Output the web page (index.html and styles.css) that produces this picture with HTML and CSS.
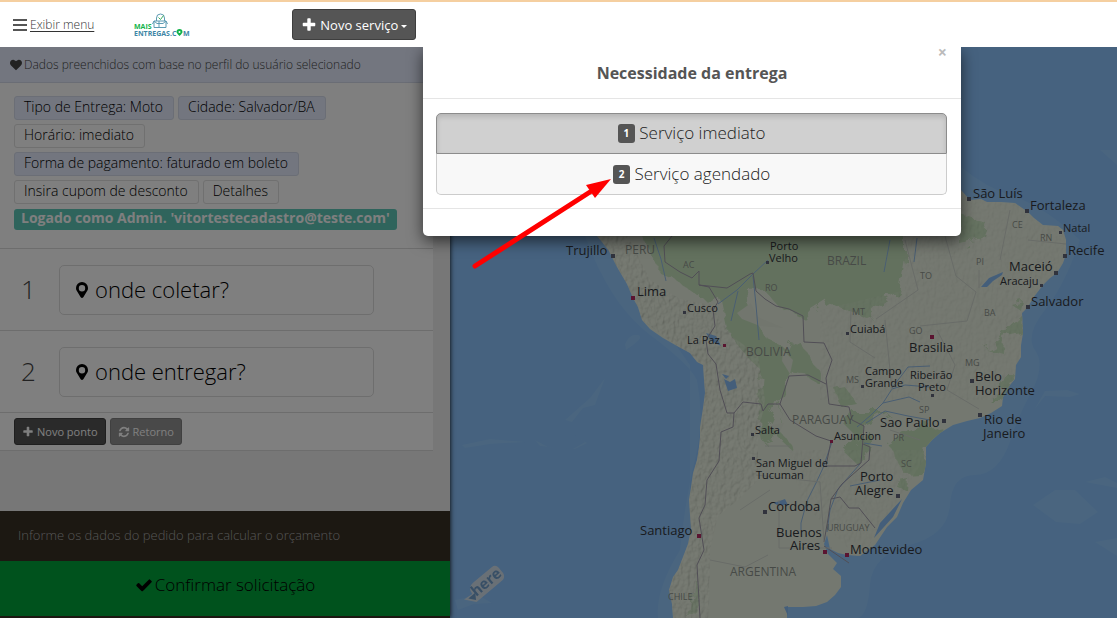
FILE: index.html
```html
<!DOCTYPE html>
<html lang="pt-BR">
<head>
<meta charset="utf-8">
<title>Mais Entregas</title>
<link rel="stylesheet" href="styles.css">
</head>
<body>
<svg class="defs" aria-hidden="true">
  <symbol id="plus" viewBox="0 0 1792 1792"><path d="M1600 736v192q0 40-28 68t-68 28h-416v416q0 40-28 68t-68 28h-192q-40 0-68-28t-28-68v-416h-416q-40 0-68-28t-28-68v-192q0-40 28-68t68-28h416v-416q0-40 28-68t68-28h192q40 0 68 28t28 68v416h416q40 0 68 28t28 68z"/></symbol>
  <symbol id="check" viewBox="0 0 1792 1792"><path d="M1671 566q0 40-28 68l-724 724-136 136q-28 28-68 28t-68-28l-136-136-362-362q-28-28-28-68t28-68l136-136q28-28 68-28t68 28l294 295 656-657q28-28 68-28t68 28l136 136q28 28 28 68z"/></symbol>
  <symbol id="refresh" viewBox="0 0 1792 1792"><path d="M1639 1056q0 5-1 7-64 268-268 434.500t-478 166.500q-146 0-282.500-55t-243.500-157l-129 129q-19 19-45 19t-45-19-19-45v-448q0-26 19-45t45-19h448q26 0 45 19t19 45-19 45l-137 137q71 66 161 102t187 36q134 0 250-65t186-179q11-17 53-117 8-23 30-23h192q13 0 22.500 9.500t9.500 22.500zm25-800v448q0 26-19 45t-45 19h-448q-26 0-45-19t-19-45 19-45l138-138q-148-137-349-137-134 0-250 65t-186 179q-11 17-53 117-8 23-30 23h-199q-13 0-22.500-9.500t-9.500-22.500v-7q65-268 270-434.500t480-166.500q146 0 284 55.500t245 156.500l130-129q19-19 45-19t45 19 19 45z"/></symbol>
  <symbol id="pin" viewBox="0 0 12 16"><path fill-rule="evenodd" d="M6 0a6 6 0 0 1 6 6q0 1.500-.6 2.600L7.300 15.200Q6 16.600 4.700 15.200L.6 8.600Q0 7.500 0 6a6 6 0 0 1 6-6zM6 3a3.200 3.200 0 1 0 0 6.400A3.200 3.200 0 0 0 6 3z"/></symbol>
  <symbol id="heart" viewBox="0 0 1792 1792"><path d="M896 1664q-26 0-44-18l-624-602q-10-8-27.500-26t-55.500-65.500-68-97.500-53.500-121-23.500-138q0-220 127-344t351-124q62 0 126.500 21.500t120 58 95.500 68.500 76 68q36-36 76-68t95.500-68.500 120-58 126.500-21.500q224 0 351 124t127 344q0 221-229 450l-623 600q-18 18-44 18z"/></symbol>
</svg>

<header class="topbar">
  <a class="menu-link" href="#"><svg class="menu-icon" viewBox="0 0 14 12"><path d="M0 1h14M0 6h14M0 11h14"/></svg><span>Exibir menu</span></a>
  <svg class="logo" viewBox="0 0 58 24" role="img" aria-label="Mais Entregas.com">
    <g fill="none" stroke="#5d9bb3"><path d="M20 8v6.500h12V8zM20 8l-1.500 3M32 8l1.500 3M20 8l3 2.500h6L32 8M25 8v6M22.500 8V5a4 4 0 1 1 8 0v3"/><path d="M24.500 4.500l2 2 3-4" stroke="#3db05c"/></g>
    <text class="logo-mais" x="0" y="16">MAIS</text>
    <text class="logo-name" x="0" y="23">ENTREGAS.C</text>
    <path d="M45.500 23q-3-3-3-4a3 3 0 0 1 6 0q0 1-3 4z" fill="#12b34a"/><circle cx="45.500" cy="19" r="1" fill="#fff"/>
    <text class="logo-name" x="49" y="23">M</text>
  </svg>
  <button class="new-service" type="button"><svg class="icon-14"><use href="#plus"/></svg><span>Novo serviço</span><i class="caret"></i></button>
</header>

<main class="workspace">
  <section class="sidebar">
    <div class="scroll">
      <p class="notice"><svg class="icon-12"><use href="#heart"/></svg>Dados preenchidos com base no perfil do usuário selecionado</p>
      <div class="chips">
        <div class="chip-row"><button class="chip filled" type="button">Tipo de Entrega: Moto</button><button class="chip filled" type="button">Cidade: Salvador/BA</button></div>
        <div class="chip-row"><button class="chip" type="button">Horário: imediato</button></div>
        <div class="chip-row"><button class="chip filled" type="button">Forma de pagamento: faturado em boleto</button></div>
        <div class="chip-row"><button class="chip" type="button">Insira cupom de desconto</button><button class="chip" type="button">Detalhes</button></div>
        <div class="logged">Logado como Admin. 'vitortestecadastro@teste.com'</div>
      </div>
      <div class="stop"><label class="stop-number" for="coleta">1</label><div class="stop-field"><svg class="icon-pin"><use href="#pin"/></svg><input id="coleta" type="text" placeholder="onde coletar?"></div></div>
      <div class="stop"><label class="stop-number" for="entrega">2</label><div class="stop-field"><svg class="icon-pin"><use href="#pin"/></svg><input id="entrega" type="text" placeholder="onde entregar?"></div></div>
      <div class="actions"><button class="small-btn" type="button"><svg class="icon-12"><use href="#plus"/></svg>Novo ponto</button><button class="small-btn muted" type="button"><svg class="icon-12"><use href="#refresh"/></svg>Retorno</button></div>
    </div>
    <footer class="order">
      <p class="order-hint">Informe os dados do pedido para calcular o orçamento</p>
      <button class="confirm" type="button"><svg class="icon-18"><use href="#check"/></svg>Confirmar solicitação</button>
    </footer>
  </section>

  <svg class="map" viewBox="450 47 667 571" preserveAspectRatio="xMinYMin slice" role="img" aria-label="Mapa da América do Sul">
    <defs>
      <filter id="relief" x="0" y="0" width="1" height="1"><feTurbulence type="fractalNoise" baseFrequency="0.28 0.18" numOctaves="3" seed="4" result="n"/><feDiffuseLighting in="n" surfaceScale="2" lighting-color="#fbfff0" result="l"><feDistantLight azimuth="225" elevation="58"/></feDiffuseLighting><feComposite in="l" in2="SourceGraphic" operator="in"/></filter>
      <filter id="rough" x="-10%" y="-10%" width="120%" height="120%"><feTurbulence type="fractalNoise" baseFrequency="0.07" numOctaves="3" seed="8"/><feDisplacementMap in="SourceGraphic" scale="16"/></filter>
      <path id="land" d="M560 170L597 236 602 242 609 251 617 267 627 284 633 298 638 307 642 320 650 329 663 338 677 346 690 353 697 362 703 365 704 380 705 393 703 408 700 427 700 437 699 447 697 460 693 473 691 487 689 500 690 515 691 530 688 544 683 557 678 570 673 577 669 590 672 604 673 618H787V607L803 607 816 606 827 602 835 595 841 587 841 576 833 569 837 563 828 554 824 544 827 535 830 549 838 553 847 555 860 556 875 545 887 527 897 517 903 503 911 490 923 480 926 463 926 447 932 440 940 433 953 425 967 421 980 418 991 413 1002 406 1003 397 1010 385 1015 379 1016 365 1021 357 1021 345 1023 333 1022 313 1028 307 1033 298 1043 285 1050 278 1057 273 1063 263 1066 254 1066 240 1063 230 1058 226 1043 225 1034 218 1028 212 1015 203 1000 202 987 202 981 199 970 200 961 190 940 170Z"/>
      <clipPath id="land-clip"><use href="#land"/></clipPath>
    </defs>
    <rect x="450" y="47" width="667" height="571" fill="#8cc4fe"/>
    <g fill="#94cbff">
      <path d="M585 236Q610 305 650 335T697 380Q705 420 695 460T680 550Q655 590 658 618H690V365L600 236Z"/>
      <path d="M961 167Q985 187 1015 197T1080 240Q1065 285 1045 310T1035 350Q1046 365 1031 393T1010 442Q998 475 975 475T950 505 910 545 870 585 858 618H780V240H960Z"/>
      <path d="M1034 410L1045 391 1067 390 1080 394 1070 397 1045 396ZM1033 505L1055 490 1075 490 1098 512 1080 524 1056 522ZM1085 482L1105 477 1117 483V488ZM1095 542L1117 538V556ZM565 420L590 398 605 378 595 405 583 408 572 422ZM462 445L490 439 525 442 490 444 465 448ZM535 440L540 446 573 449 585 442 575 435 587 443 575 449 548 447ZM625 344Q630 333 638 335T626 350ZM455 600L478 595 492 603 474 604 458 610ZM1100 150H1117V165Z"/>
    </g>
    <use href="#land" fill="#e9f1e1"/>
    <g clip-path="url(#land-clip)">
      <g class="forest" filter="url(#rough)">
        <path d="M635 220H905V260L899 292 880 305 868 318 850 311 829 301 813 311 806 319 779 307 764 290 749 291 751 313 765 337 790 349 792 372 770 420 760 432 758 402 761 370 744 354 728 333 721 300 699 297 674 279 660 273Z"/>
        <path d="M790 342L803 345 819 372 818 383 800 373 782 370 780 430 790 444 796 454 782 441 778 372ZM836 390L846 388 858 405 841 408ZM854 412H888L865 423 860 440 846 426ZM843 451L870 431 872 452 858 465ZM887 443L905 434 930 425 945 431 926 449 920 474 905 475ZM984 347L997 340 1023 315 1022 334 1003 338 1002 352ZM1003 375H1015L1003 399 991 404ZM895 485L910 481 909 493ZM961 215L986 223 979 240 960 244ZM1010 303L1022 300 1020 310ZM696 576L699 595 695 618H688ZM760 418L785 438 765 444Z"/>
      </g>
      <path class="clearing" d="M737 313L751 303 758 317 784 328 760 326 742 319ZM783 350L793 360 790 374 782 361ZM771 425L784 423 779 434Z"/>
      <path class="mountains" filter="url(#relief)" d="M597 236L628 236 650 280 680 299 712 305 730 335 758 355 765 400 758 440 758 480 738 500 718 516 710 550 709 618H673L669 590 691 530 689 500 699 447 705 393 703 365 642 320 617 267Z"/>
      <path class="hills" filter="url(#relief)" d="M758 400H1070V190H905V290L820 310 820 400ZM790 450H930L860 560 800 500Z"/>
    </g>
    <g class="rivers">
      <path d="M654 238L661 259 666 281M768 260L753 274 737 290 718 304M753 276L756 305 759 340M738 291L731 321M917 238L914 262M890 240L884 272M857 427L871 415 883 403 892 389 905 385 930 387M883 403L909 397 920 402M892 388L908 367 930 366M866 423L885 411 908 416 930 420M864 443L882 446M832 442L823 468 816 483 807 501 801 523V530M860 464L838 489 830 510 827 532M880 480L850 486"/>
      <path class="lake" d="M706 333L716 336 721 346 711 341ZM722 374L729 376 726 379ZM724 379L730 382 735 379 737 388 728 391ZM981 287L989 278 1003 272 1002 275 993 281 987 287ZM774 503L785 499 788 505 777 505ZM874 538L880 523 902 499 893 517ZM784 607L788 606V616Z"/>
    </g>
    <g class="borders">
      <path d="M672 236L664 246 665 262 680 272 692 278 699 271 699 285 727 288 750 274 753 273 756 291 765 299 776 306 789 309 803 316 804 342 824 343 832 360 826 378 829 404M699 285L709 287 718 302 713 310 715 326 706 340 708 354 716 364 720 390 727 413H734L743 402 761 404 763 411 768 404 780 404 789 376 808 375 826 384M734 413L733 427 721 432 719 461 707 480 705 505 699 518 704 550 697 565 700 618M780 404L790 420 816 436 831 441 826 466 855 466 861 463 864 426 852 420 849 407 829 404M863 444L870 447 869 460 842 484 831 499 828 519 824 542M831 499L840 497 849 508 859 508 875 528M824 546L849 563"/>
      <path class="states" d="M765 446H790M779 500V548H832M756 475L820 482 824 542M710 560L745 567 768 555M740 510L770 490M905 240L918 290 876 319M945 236L956 276 976 292 967 321 920 326M851 308L850 342 875 358M885 320L892 390M937 330L955 365 947 390 979 409M890 430L920 440M1010 210L1000 260M1028 240L1066 244M979 288L979 270"/>
    </g>
    <g class="areas">
      <text x="625" y="254">PERU</text><text x="827" y="265">BRAZIL</text><text x="746" y="356">BOLIVIA</text><text x="792" y="424">PARAGUAY</text><text x="730" y="576">ARGENTINA</text>
      <g class="minor"><text x="827" y="531">URUGUAY</text><text x="668" y="600">CHILE</text><text x="683" y="268">AC</text><text x="765" y="291">RO</text><text x="920" y="279">TO</text><text x="976" y="265">PI</text><text x="852" y="315">MT</text><text x="909" y="334">GO</text><text x="984" y="316">BA</text><text x="965" y="366">MG</text><text x="846" y="383">MS</text><text x="919" y="413">SP</text><text x="893" y="441">PR</text><text x="901" y="467">SC</text><text x="1012" y="228">CE</text><text x="1040" y="241">RN</text></g>
    </g>
    <g class="towns">
      <text x="566" y="255">Trujillo</text><text x="637" y="296">Lima</text><text x="973" y="198">São Luís</text><text x="1030" y="210">Fortaleza</text><text x="1068" y="255">Recife</text><text x="1009" y="271">Maceió</text><text x="1031" y="306">Salvador</text><text x="909" y="352">Brasilia</text><text x="975" y="381">Belo</text><text x="975" y="395">Horizonte</text><text x="880" y="427">Sao Paulo</text><text x="984" y="424">Rio de</text><text x="983" y="438">Janeiro</text><text x="860" y="481">Porto</text><text x="855" y="495">Alegre</text><text x="768" y="511">Cordoba</text><text x="776" y="537">Buenos</text><text x="790" y="550">Aires</text><text x="850" y="554">Montevideo</text><text x="640" y="535">Santiago</text>
      <g class="minor"><text x="687" y="312">Cusco</text><text x="687" y="344">La Paz</text><text x="770" y="250">Porto</text><text x="769" y="262">Velho</text><text x="850" y="333">Cuiabá</text><text x="865" y="375">Campo</text><text x="865" y="387">Grande</text><text x="910" y="379">Ribeirão</text><text x="918" y="391">Preto</text><text x="755" y="434">Salta</text><text x="834" y="440">Asuncion</text><text x="756" y="467">San Miguel de</text><text x="756" y="479">Tucuman</text><text x="1000" y="285">Aracaju</text><text x="1063" y="232">Natal</text></g>
    </g>
    <path class="dots" d="M611 254h4v4h-4zM683 311h3v3h-3zM766 261h3v3h-3zM846 332h3v3h-3zM861 385h3v3h-3zM931 394h3v3h-3zM970 379h4v4h-4zM942 419h4v4h-4zM978 413h4v4h-4zM896 494h4v4h-4zM763 510h4v4h-4zM751 433h3v3h-3zM752 457h3v3h-3zM967 197h4v4h-4zM1025 209h4v4h-4zM1059 231h3v3h-3zM1063 254h4v4h-4zM1054 271h4v4h-4zM1040 284h3v3h-3zM1026 305h4v4h-4z"/>
    <path class="capitals" d="M631 296h4v4h-4zM723 344h3v3h-3zM930 335h4v4h-4zM830 440h3v3h-3zM697 534h4v4h-4zM823 550h4v4h-4zM845 553h4v4h-4z"/>
    <g class="here" transform="translate(474 599) rotate(-40)"><path d="M-8-6L2-5Q2-13 10-13H34Q39-13 39-8V-1Q38 4 33 4H0Z"/><path class="here-arrow" d="M-4-4L5-4 1 2Z"/><text x="3" y="0">here</text></g>
  </svg>

  <div class="backdrop"></div>

  <section class="modal" role="dialog" aria-labelledby="modal-title">
    <button class="close" type="button" aria-label="Fechar">×</button>
    <h2 class="modal-title" id="modal-title">Necessidade da entrega</h2>
    <div class="modal-body"><div class="options">
      <button class="option active" type="button"><span class="badge">1</span>Serviço imediato</button>
      <button class="option" type="button"><span class="badge">2</span>Serviço agendado</button>
    </div></div>
    <div class="modal-foot"></div>
  </section>
  <svg class="arrow" viewBox="0 0 144 96" aria-hidden="true"><path d="M5 90L120 16" stroke="#f00" stroke-width="5" stroke-linecap="round"/><path d="M141 3L116 9 125 22Z" fill="#f00"/></svg>
</main>
</body>
</html>
```
FILE: styles.css
```css
* { box-sizing: border-box; }
body {
  margin: 0;
  height: 100vh;
  display: flex;
  flex-direction: column;
  overflow: hidden;
  font-family: "Open Sans", "Noto Sans", sans-serif;
  font-weight: 300;
  color: #000;
}
button, input { font: inherit; color: inherit; }
p, h2 { margin: 0; }
svg { flex: none; fill: currentColor; }
.defs { position: absolute; width: 0; height: 0; }
.icon-12 { width: 12px; height: 12px; }
.icon-14 { width: 16px; height: 16px; }
.icon-18 { width: 18px; height: 18px; }
.icon-pin { width: 12px; height: 16px; }

.topbar {
  flex: none;
  height: 47px;
  display: flex;
  align-items: center;
  padding: 0 13px;
  border-top: 2px solid #f5cfa0;
  background: #fff;
}
.menu-link { display: flex; align-items: center; gap: 3px; color: #333; font-size: 12px; text-decoration: none; }
.menu-link span { text-decoration: underline; text-underline-offset: 2px; }
.menu-icon { width: 14px; height: 12px; stroke: #555; stroke-width: 2; }
.logo { width: 58px; height: 24px; margin-left: 40px; }
.logo-mais, .logo-name { font: 700 7px "Open Sans", sans-serif; fill: #3e86a6; }
.logo-mais { fill: #12b34a; }
.new-service {
  display: flex;
  align-items: center;
  gap: 3px;
  height: 31px;
  margin-left: 100px;
  padding: 0 8px;
  border: 1px solid #3e3e3e;
  border-radius: 3px;
  background: #555;
  color: #fff;
  font-size: 13px;
  font-weight: 400;
}
.caret { border: 3px solid transparent; border-top-color: #fff; border-bottom: 0; margin-top: 3px; }

.workspace { position: relative; flex: 1; display: flex; min-height: 0; overflow: hidden; }
.sidebar { position: relative; z-index: 1; flex: none; width: 450px; display: flex; flex-direction: column; box-shadow: 0 0 5px #000; }
.scroll { flex: 1; min-height: 0; overflow: hidden; background: #eee; }
.notice {
  display: flex;
  align-items: center;
  gap: 2px;
  height: 36px;
  padding-left: 10px;
  border-bottom: 1px solid #d4daea;
  background: #e6edff;
  color: #444;
  font-size: 12px;
}
.chips, .stop, .actions { margin-right: 17px; border-bottom: 1px solid #dadada; background: #fff; }
.chips { display: flex; flex-direction: column; align-items: flex-start; gap: 4px; padding: 13px 14px 18px; }
.chip-row { display: flex; gap: 4px; }
.chip {
  height: 24px;
  padding: 0 10px 2px 9px;
  border: 1px solid #e0e0e0;
  border-radius: 3px;
  background: #fff;
  font-size: 14px;
  line-height: 20px;
}
.chip.filled { border-color: #d6dcec; background: #e6edff; }
.logged { height: 21px; margin-top: 1px; padding: 0 7px; border-radius: 3px; background: #5ec8b8; color: #fff; font-size: 14px; font-weight: 700; line-height: 18px; }
.stop { display: flex; align-items: center; height: 82px; }
.stop-number { width: 59px; padding: 0 0 2px 21px; color: #444; font-size: 26px; }
.stop-field {
  display: flex;
  align-items: center;
  gap: 7px;
  width: 315px;
  height: 50px;
  padding-left: 16px;
  border: 1px solid #ddd;
  border-radius: 5px;
}
.stop-field input { flex: 1; min-width: 0; padding: 0 0 2px; border: 0; outline: 0; background: none; font-size: 22px; }
.stop-field input::placeholder { color: #000; opacity: 1; }
.actions { display: flex; gap: 4px; height: 38px; padding: 5px 14px; }
.small-btn {
  display: flex;
  align-items: center;
  gap: 3px;
  height: 27px;
  padding: 0 7px;
  border: 1px solid #3e3e3e;
  border-radius: 3px;
  background: #555;
  color: #fff;
  font-size: 11px;
  font-weight: 400;
}
.small-btn.muted { border-color: #808080; background: #929292; }
.order { flex: none; padding-bottom: 2px; background: #383024; }
.order-hint { height: 50px; padding: 0 18px; color: #aaa; font-size: 13px; line-height: 48px; }
.confirm {
  display: flex;
  align-items: center;
  justify-content: center;
  gap: 2px;
  width: 100%;
  height: 55px;
  padding: 0 0 8px;
  border: 0;
  background: #00a43a;
  font-size: 17px;
}

.map { flex: 1; min-width: 0; height: 100%; font-family: "Open Sans", "Noto Sans", sans-serif; font-weight: 400; }
.forest { fill: #c7e3bd; }
.clearing { fill: #e4ecdc; }
.mountains { opacity: .35; }
.hills { opacity: .12; }
.rivers { fill: none; stroke: #93bce6; stroke-width: 1; }
.rivers .lake { fill: #88bdf5; stroke: none; }
.borders { fill: none; stroke: #a29dac; stroke-width: 1; }
.borders .states { stroke: #d2d8d0; }
.areas { fill: #8f958e; font-size: 12px; }
.areas .minor { font-size: 9px; }
.towns { fill: #33363c; font-size: 13px; }
.towns .minor { font-size: 11px; }
.dots { fill: #62667a; }
.capitals { fill: #b52860; }
.here { fill: #dbe5ec; opacity: .9; }
.here text { fill: #6f9cc8; font-size: 15px; font-weight: 700; }
.here .here-arrow { fill: #6f9cc8; }

.backdrop { position: absolute; inset: 0; z-index: 2; background: rgba(0, 0, 0, .5); }
.modal {
  position: absolute;
  z-index: 3;
  top: 0;
  left: 423px;
  width: 538px;
  border-radius: 0 0 5px 5px;
  background: #fff;
  box-shadow: 0 5px 15px rgba(0, 0, 0, .6);
}
.close { position: absolute; top: -5px; right: 14px; padding: 0; border: 0; background: none; color: #bbb; font-size: 16px; font-weight: 700; line-height: 20px; }
.modal-title { height: 52px; border-bottom: 1px solid #e5e5e5; color: #555; font-size: 16px; font-weight: 700; line-height: 52px; text-align: center; }
.modal-body { padding: 14px 14px 13px 13px; }
.options { display: flex; flex-direction: column; }
.option {
  display: flex;
  align-items: center;
  justify-content: center;
  gap: 4px;
  height: 41px;
  padding: 0 0 2px;
  border: 1px solid #ccc;
  border-top: 0;
  border-radius: 0 0 5px 5px;
  background: #f8f8f8;
  color: #222;
  font-size: 17px;
}
.option.active { border: 1px solid #8c8c8c; border-radius: 5px 5px 0 0; background: #d0d0d0; box-shadow: inset 0 3px 5px rgba(0, 0, 0, .125); }
.badge { margin-top: 2px; padding: 0 6px; border-radius: 3px; background: #555; color: #fff; font-size: 10px; font-weight: 700; line-height: 19px; }
.modal-foot { height: 28px; border-top: 1px solid #e5e5e5; }
.arrow { position: absolute; z-index: 4; left: 470px; top: 129px; width: 144px; height: 96px; }
```
